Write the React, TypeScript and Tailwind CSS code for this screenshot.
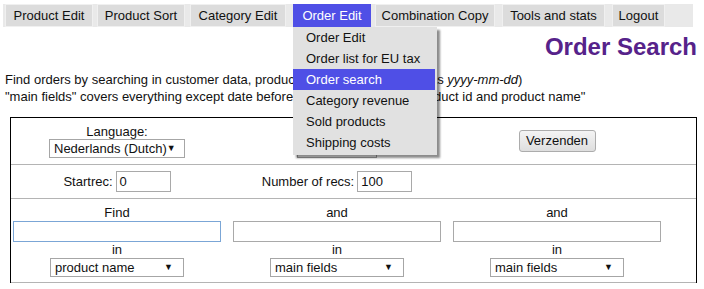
import React from "react";

const menu = [
    { label: "Product Edit", cls: "w-[88px]" },
    { label: "Product Sort", cls: "w-[88px] ml-[4px]" },
    { label: "Category Edit", cls: "w-[96px] ml-[5px]" },
    { label: "Order Edit", cls: "w-[78px] ml-[7px]", active: true },
    { label: "Combination Copy", cls: "w-[120px] ml-[4px]" },
    { label: "Tools and stats", cls: "w-[103px] ml-[7px]" },
    { label: "Logout", cls: "w-[53px] ml-[7px]" },
];

const subMenu = [
    "Order Edit",
    "Order list for EU tax",
    "Order search",
    "Category revenue",
    "Sold products",
    "Shipping costs",
];

const Select: React.FC<{ value: string; className: string }> = ({ value, className }) => (
    <div
        className={`flex items-center justify-between h-[19px] border border-[#a6a6a6] bg-white pl-[4px] pr-[10px] text-[13px] leading-[15px] ${className}`}
    >
        <span className="whitespace-nowrap">{value}</span>
        <span className="text-[9px] leading-none">▼</span>
    </div>
);

const TextInput: React.FC<{ value?: string; className: string }> = ({ value = "", className }) => (
    <div
        className={`h-[21px] bg-white pl-[3px] text-[13px] leading-[19px] ${className}`}
    >
        {value}
    </div>
);

const FindColumn: React.FC<{ label: string; field: string; focused?: boolean }> = ({
    label,
    field,
    focused,
}) => (
    <div className="w-[208px] flex flex-col items-center">
        <div className="leading-[15px]">{label}</div>
        <TextInput
            className={`w-[208px] mt-px border ${
                focused ? "border-[#7ba6d6]" : "border-[#a9a9a9]"
            }`}
        />
        <div className="leading-[15px]">in</div>
        <Select value={field} className="w-[134px] mt-px" />
    </div>
);

export default function App() {
    return (
        <div className="w-[704px] h-[289px] overflow-hidden bg-white text-[13px] text-[#111] font-['Liberation_Sans',Arial,sans-serif]">
            {/* top menu */}
            <div className="relative mt-[4px] ml-[3px] w-[690px] h-[23px] bg-[#e9e9e9] pl-[2px] flex">
                {menu.map((m) => (
                    <div key={m.label} className={`relative ${m.cls}`}>
                        <div
                            className={`h-[23px] flex items-center justify-center whitespace-nowrap ${
                                m.active
                                    ? "bg-[#4f4fe6] text-white"
                                    : "bg-[#dcdcdc] border border-[#f0f0f0]"
                            }`}
                        >
                            {m.label}
                        </div>
                        {m.active && (
                            <div className="absolute z-10 left-0 top-[23px] w-[144px] pb-[2px] bg-[#e1e1e1] shadow-[3px_3px_2px_rgba(0,0,0,0.45)]">
                                {subMenu.map((s) => (
                                    <div
                                        key={s}
                                        className={`h-[21px] w-[142px] pl-[13px] flex items-center whitespace-nowrap ${
                                            s === "Order search" ? "bg-[#4f4fe6] text-white" : ""
                                        }`}
                                    >
                                        {s}
                                    </div>
                                ))}
                            </div>
                        )}
                    </div>
                ))}
            </div>

            <h1 className="mt-[6px] pr-[7px] text-right text-[24px] leading-[28px] font-bold text-[#56228a]">
                Order Search
            </h1>

            <p className="mt-[10px] ml-[5px] leading-[17px] whitespace-nowrap">
                Find orders by searching in customer data, product and order data (dates as{" "}
                <i>yyyy-mm-dd</i>)
                <br />
                "main fields" covers everything except date before and dates after, and product id and
                product name"
            </p>

            {/* search form */}
            <div className="mt-[12px] ml-[10px] w-[687px] border-t border-l border-r border-black">
                <div className="h-[47px] border-b border-[#b4b4b4] pl-[2px] flex items-center gap-[12px]">
                    <div className="w-[208px] flex flex-col items-center">
                        <div className="leading-[15px]">Language:</div>
                        <Select value="Nederlands (Dutch)" className="w-[136px] mt-[0.5px]" />
                    </div>
                    <div className="w-[208px] flex flex-col items-center">
                        <div className="leading-[15px]">Status:</div>
                        <Select value="all" className="w-[80px] mt-[0.5px]" />
                    </div>
                    <div className="w-[208px] flex justify-center">
                        <button className="h-[22px] w-[77px] border border-[#acacac] rounded-[3px] bg-gradient-to-b from-[#f4f4f4] to-[#dedede] text-[13px]">
                            Verzenden
                        </button>
                    </div>
                </div>

                <div className="h-[34px] border-b border-[#b4b4b4] pl-[2px] flex items-center gap-[12px]">
                    <div className="w-[208px] flex items-center justify-center gap-[3px]">
                        <span>Startrec:</span>
                        <TextInput value="0" className="w-[55px] border border-[#a9a9a9]" />
                    </div>
                    <div className="w-[208px] flex items-center justify-center gap-[3px]">
                        <span>Number of recs:</span>
                        <TextInput value="100" className="w-[55px] border border-[#a9a9a9]" />
                    </div>
                </div>

                <div className="h-[84px] border-b border-[#b4b4b4] pl-[2px] flex items-center gap-[12px]">
                    <FindColumn label="Find" field="product name" focused />
                    <FindColumn label="and" field="main fields" />
                    <FindColumn label="and" field="main fields" />
                </div>
            </div>
        </div>
    );
}
